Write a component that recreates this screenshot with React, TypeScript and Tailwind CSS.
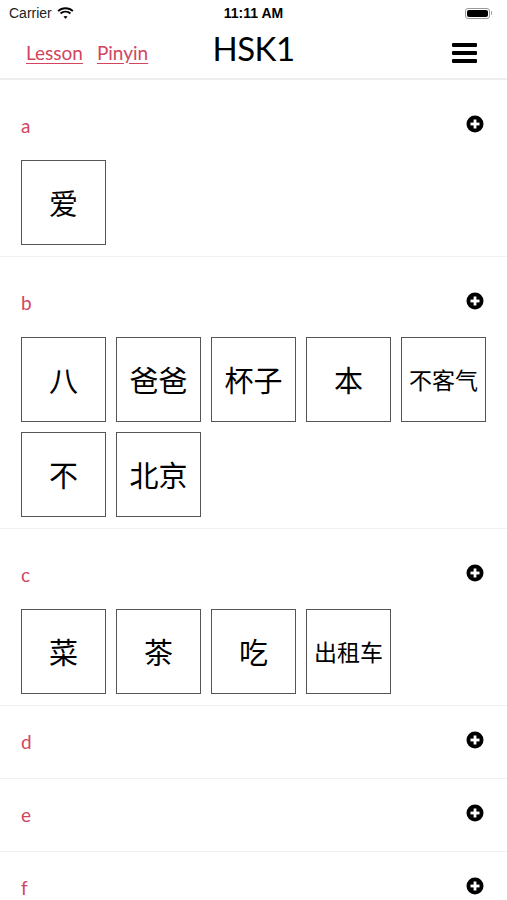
import React from "react";

const sections: { label: string; words: string[] }[] = [
  { label: "a", words: ["爱"] },
  { label: "b", words: ["八", "爸爸", "杯子", "本", "不客气", "不", "北京"] },
  { label: "c", words: ["菜", "茶", "吃", "出租车"] },
  { label: "d", words: [] },
  { label: "e", words: [] },
  { label: "f", words: [] },
];

const cjk = { fontFamily: '"Noto Sans CJK SC", "Noto Sans CJK JP", sans-serif' };
const latin = { fontFamily: 'Lato, "Liberation Sans", sans-serif' };

function PlusIcon() {
  return (
    <svg width="18" height="18" viewBox="0 0 18 18">
      <circle cx="9" cy="9" r="8.5" fill="#000" />
      <rect x="4.5" y="7.6" width="9" height="2.8" fill="#fff" />
      <rect x="7.6" y="4.5" width="2.8" height="9" fill="#fff" />
    </svg>
  );
}

function Wifi() {
  return (
    <svg width="17" height="12" viewBox="0 0 17 12">
      <path d="M8.5 2.2c2.6 0 4.9 1 6.7 2.6l1.3-1.4C14.4 1.4 11.6.2 8.5.2S2.6 1.4.5 3.4l1.3 1.4C3.6 3.2 5.9 2.2 8.5 2.2z" fill="#000" />
      <path d="M8.5 5.6c1.6 0 3.1.6 4.3 1.6l1.3-1.4C12.6 4.5 10.6 3.7 8.5 3.7S4.4 4.5 2.9 5.8l1.3 1.4c1.2-1 2.7-1.6 4.3-1.6z" fill="#000" />
      <path d="M8.5 8.9c.8 0 1.5.3 2 .8L8.5 11.8 6.5 9.7c.5-.5 1.2-.8 2-.8z" fill="#000" />
    </svg>
  );
}

function Tile({ w }: { w: string }) {
  const size = w.length >= 3 ? "text-[23px]" : "text-[29px]";
  return (
    <div
      className={`w-[85px] h-[85px] border-[1.5px] border-[#555] flex items-center justify-center text-black ${size}`}
      style={cjk}
    >
      {w}
    </div>
  );
}

export default function App() {
  return (
    <div className="w-[507px] h-[900px] bg-white overflow-hidden">
      {/* status bar */}
      <div className="relative h-[26px] flex items-center px-[9px] text-[14px] text-[#222]" style={{ fontFamily: '"Liberation Sans", Roboto, sans-serif' }}>
        <div className="flex items-center gap-[5px]">
          <span>Carrier</span>
          <Wifi />
        </div>
        <div className="absolute left-0 right-0 top-0 h-[26px] flex items-center justify-center font-bold text-black">
          11:11 AM
        </div>
        <div className="ml-auto flex items-center mr-[6px]">
          <div className="w-[25px] h-[11px] rounded-[3px] border border-[#999] p-[1px]">
            <div className="w-full h-full bg-black rounded-[2px]" />
          </div>
          <div className="w-[1.5px] h-[4px] bg-[#999] ml-[1px] rounded-r" />
        </div>
      </div>
      {/* nav bar */}
      <div className="relative h-[54px] flex items-center px-[26px] border-b-2 border-[#eeeeee]">
        <div className="flex items-center gap-[14px] text-[19px] text-[#d2455f] underline underline-offset-[3px] pt-[2px]" style={latin}>
          <span>Lesson</span>
          <span>Pinyin</span>
        </div>
        <div className="absolute left-0 right-0 top-0 h-[46px] flex items-center justify-center text-[33px] text-black tracking-[-0.5px]" style={latin}>
          HSK1
        </div>
        <div className="ml-auto mr-[4px] flex flex-col gap-[4px] pt-[2px]">
          <div className="w-[25px] h-[4px] bg-black rounded-[1px]" />
          <div className="w-[25px] h-[4px] bg-black rounded-[1px]" />
          <div className="w-[25px] h-[4px] bg-black rounded-[1px]" />
        </div>
      </div>
      {sections.map((s) => (
        <div key={s.label} className="border-b border-[#f0f0f0]">
          {s.words.length > 0 ? (
            <div className="pb-[11px]">
              <div className="pt-[12px] h-[80px] flex items-center px-[21px]">
                <span className="text-[19px] text-[#d2455f]" style={latin}>{s.label}</span>
                <span className="ml-auto mr-[2px] -mt-[4px]"><PlusIcon /></span>
              </div>
              <div className="pl-[21px] pr-[19px] flex flex-wrap gap-[10px]">
                {s.words.map((w, i) => (
                  <Tile key={i} w={w} />
                ))}
              </div>
            </div>
          ) : (
            <div className="h-[72px] flex items-center px-[21px]">
              <span className="text-[19px] text-[#d2455f]" style={latin}>{s.label}</span>
              <span className="ml-auto mr-[2px] -mt-[4px]"><PlusIcon /></span>
            </div>
          )}
        </div>
      ))}
    </div>
  );
}
